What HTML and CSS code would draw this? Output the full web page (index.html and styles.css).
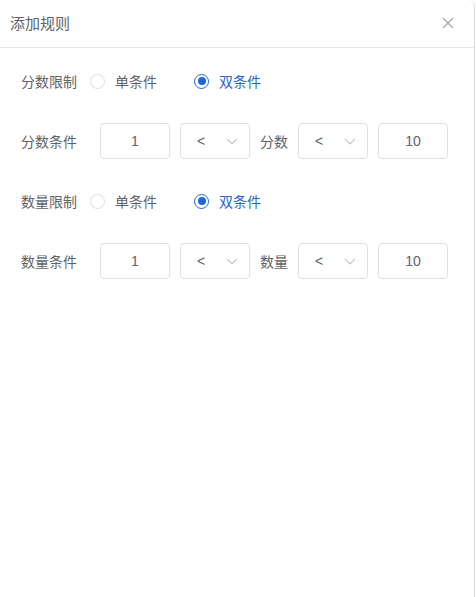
FILE: index.html
```html
<!DOCTYPE html>
<html lang="zh">
<head>
<meta charset="utf-8">
<title>添加规则</title>
<link rel="stylesheet" href="styles.css">
</head>
<body>
<div class="dialog">
  <div class="header">
    <span class="title">添加规则</span>
    <svg class="close" width="12" height="12" viewBox="0 0 12 12"><path d="M1 1L11 11M11 1L1 11" stroke="#a0a3a8" stroke-width="1.2" fill="none"/></svg>
  </div>
  <div class="body">
    <div class="row">
      <span class="rlabel">分数限制</span>
      <label class="radio"><span class="circle"></span><span class="rtext">单条件</span></label>
      <label class="radio checked"><span class="circle"><span class="dot"></span></span><span class="rtext">双条件</span></label>
    </div>
    <div class="row">
      <span class="clabel">分数条件</span>
      <div class="box">1</div>
      <div class="box select"><span>&lt;</span><svg width="12" height="7" viewBox="0 0 12 7"><path d="M1 1L6 6L11 1" stroke="#c4c7cc" stroke-width="1.2" fill="none"/></svg></div>
      <span class="mid">分数</span>
      <div class="box select"><span>&lt;</span><svg width="12" height="7" viewBox="0 0 12 7"><path d="M1 1L6 6L11 1" stroke="#c4c7cc" stroke-width="1.2" fill="none"/></svg></div>
      <div class="box">10</div>
    </div>
    <div class="row">
      <span class="rlabel">数量限制</span>
      <label class="radio"><span class="circle"></span><span class="rtext">单条件</span></label>
      <label class="radio checked"><span class="circle"><span class="dot"></span></span><span class="rtext">双条件</span></label>
    </div>
    <div class="row">
      <span class="clabel">数量条件</span>
      <div class="box">1</div>
      <div class="box select"><span>&lt;</span><svg width="12" height="7" viewBox="0 0 12 7"><path d="M1 1L6 6L11 1" stroke="#c4c7cc" stroke-width="1.2" fill="none"/></svg></div>
      <span class="mid">数量</span>
      <div class="box select"><span>&lt;</span><svg width="12" height="7" viewBox="0 0 12 7"><path d="M1 1L6 6L11 1" stroke="#c4c7cc" stroke-width="1.2" fill="none"/></svg></div>
      <div class="box">10</div>
    </div>
  </div>
</div>
</body>
</html>
```
FILE: styles.css
```css
* { box-sizing: border-box; }
html, body { margin: 0; padding: 0; background: #fff; }
body {
  font-family: "Liberation Sans", "Noto Sans CJK SC", sans-serif;
  font-size: 14px;
  color: #606266;
}
.dialog {
  width: 475px;
  height: 597px;
  border-right: 1px solid #dcdcdc;
  border-top-right-radius: 6px;
  background: #fff;
}
.header {
  height: 48px;
  border-bottom: 1px solid #e8e8e8;
  display: flex;
  align-items: center;
  justify-content: space-between;
  padding: 0 20px 2px 10px;
}
.title {
  font-size: 15px;
  color: #606266;
}
.body {
  padding: 15px 0 0 21px;
  display: flex;
  flex-direction: column;
  gap: 24px;
}
.row {
  height: 36px;
  display: flex;
  align-items: center;
}
.rlabel { width: 69px; }
.clabel { width: 79px; }
.radio {
  display: flex;
  align-items: center;
  margin-right: 37px;
}
.circle {
  width: 15px;
  height: 15px;
  border: 1px solid #dcdfe6;
  border-radius: 50%;
  display: flex;
  align-items: center;
  justify-content: center;
  margin-right: 10px;
}
.checked .circle { border-color: #1f66dc; }
.dot {
  width: 8px;
  height: 8px;
  border-radius: 50%;
  background: #1f66dc;
}
.checked .rtext { color: #2a66c8; }
.box {
  width: 70px;
  height: 36px;
  border: 1px solid #dcdfe6;
  border-radius: 4px;
  display: flex;
  align-items: center;
  justify-content: center;
  margin-right: 10px;
  color: #606266;
}
.select {
  justify-content: space-between;
  padding: 0 11px 0 16px;
}
.select svg { margin-top: 1px; }
.mid { margin-right: 10px; }
```
